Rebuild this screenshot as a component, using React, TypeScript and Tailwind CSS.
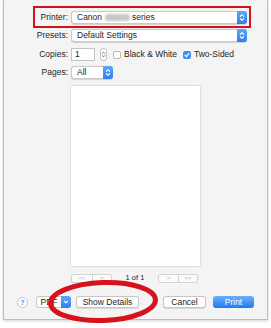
import React from "react";

const Arrows = ({ color = "white" }: { color?: string }) => (
  <svg width="6" height="9" viewBox="0 0 6 9" fill="none" stroke={color} strokeWidth="1.1" strokeLinecap="round" strokeLinejoin="round">
    <path d="M1.3 3.3 L3 1.6 L4.7 3.3" />
    <path d="M1.3 5.7 L3 7.4 L4.7 5.7" />
  </svg>
);

function Popup({ text, width, children }: { text?: string; width: string; children?: React.ReactNode }) {
  return (
    <div className={`${width} h-[13px] flex items-stretch bg-white border border-[#c9c9c9] rounded-[3px] shadow-[0_0.5px_1px_rgba(0,0,0,0.15)]`}>
      <div className="flex-1 flex items-center pl-[5px] text-[8.5px] text-[#1e1e1e] leading-none">
        {children ?? text}
      </div>
      <div className="w-[10px] -my-px -mr-px rounded-r-[3px] bg-gradient-to-b from-[#5ba6fb] to-[#2a80f1] flex items-center justify-center">
        <Arrows />
      </div>
    </div>
  );
}

function Checkbox({ checked }: { checked?: boolean }) {
  if (checked) {
    return (
      <div className="w-[8px] h-[8px] rounded-[2px] bg-[#3a8ef6] flex items-center justify-center">
        <svg width="6" height="6" viewBox="0 0 6 6" fill="none" stroke="white" strokeWidth="1.2" strokeLinecap="round" strokeLinejoin="round">
          <path d="M1 3.2 L2.4 4.6 L5 1.4" />
        </svg>
      </div>
    );
  }
  return <div className="w-[8px] h-[8px] rounded-[2px] bg-white border border-[#b8b8b8]" />;
}

function Button({ children, width, className = "" }: { children: React.ReactNode; width: string; className?: string }) {
  return (
    <div className={`${width} h-[12px] flex items-center justify-center bg-white border border-[#c6c6c6] rounded-[3px] text-[8.5px] leading-none text-[#1e1e1e] shadow-[0_0.5px_1px_rgba(0,0,0,0.12)] ${className}`}>
      {children}
    </div>
  );
}

export default function App() {
  return (
    <div className="relative w-[271px] h-[328px] bg-white overflow-hidden" style={{ fontFamily: '"Liberation Sans", Arial, sans-serif' }}>
      <div className="ml-[3px] w-[265px] h-[320px] bg-[#f4f4f4] border-x border-b border-[#bdbdbd] shadow-[0_1px_3px_rgba(0,0,0,0.18)] flex flex-col">
        {/* printer row */}
        <div className="mt-[6px] ml-[29px] w-[218px] h-[22px] border-2 border-[#d3121c] flex items-center">
          <div className="w-[33px] text-right text-[8.5px] text-[#1e1e1e] leading-none">Printer:</div>
          <div className="ml-[3px]">
            <Popup width="w-[176px]">
              <span>Canon</span>
              <span className="ml-[3px] w-[25px] h-[7px] rounded-[3px] bg-[#c8c8c8] blur-[1.2px]" />
              <span className="ml-[2px]">series</span>
            </Popup>
          </div>
        </div>

        {/* presets */}
        <div className="mt-[1px] h-[13px] flex items-center">
          <div className="w-[64px] text-right text-[8.5px] text-[#1e1e1e] leading-none">Presets:</div>
          <div className="ml-[3px]">
            <Popup width="w-[176px]" text="Default Settings" />
          </div>
        </div>

        {/* copies */}
        <div className="mt-[6px] h-[13px] flex items-center">
          <div className="w-[64px] text-right text-[8.5px] text-[#1e1e1e] leading-none">Copies:</div>
          <div className="ml-[3px] w-[24px] h-[13px] bg-white border border-[#c4c4c4] flex items-center pl-[3px] text-[8.5px] leading-none text-[#1e1e1e]">1</div>
          <div className="ml-[5px] w-[7px] h-[13px] bg-white border border-[#c4c4c4] rounded-[3px] flex items-center justify-center">
            <Arrows color="#6b6b6b" />
          </div>
          <div className="ml-[6px]">
            <Checkbox />
          </div>
          <div className="ml-[3px] text-[8.5px] leading-none text-[#1e1e1e]">Black &amp; White</div>
          <div className="ml-[6px]">
            <Checkbox checked />
          </div>
          <div className="ml-[3px] text-[8.5px] leading-none text-[#1e1e1e]">Two-Sided</div>
        </div>

        {/* pages */}
        <div className="mt-[5px] h-[13px] flex items-center">
          <div className="w-[64px] text-right text-[8.5px] text-[#1e1e1e] leading-none">Pages:</div>
          <div className="ml-[3px]">
            <Popup width="w-[42px]" text="All" />
          </div>
        </div>

        {/* preview */}
        <div className="mt-[7px] ml-[67px] w-[129px] h-[180px] bg-white shadow-[0_0_2px_rgba(0,0,0,0.25)]" />

        {/* page nav */}
        <div className="mt-[7px] h-[10px] flex items-center">
          <div className="ml-[67px] w-[41px] h-[9px] flex border border-[#d4d4d4] rounded-[2px] bg-[#fbfbfb] text-[6px] leading-none text-[#b5b5b5]">
            <div className="w-[21px] flex items-center justify-center border-r border-[#d4d4d4]">&lt;&lt;</div>
            <div className="flex-1 flex items-center justify-center">&lt;</div>
          </div>
          <div className="w-[46px] text-center text-[7.5px] leading-none text-[#1e1e1e]">1 of 1</div>
          <div className="w-[40px] h-[9px] flex border border-[#d4d4d4] rounded-[2px] bg-[#fbfbfb] text-[6px] leading-none text-[#b5b5b5]">
            <div className="w-[20px] flex items-center justify-center border-r border-[#d4d4d4]">&gt;</div>
            <div className="flex-1 flex items-center justify-center">&gt;&gt;</div>
          </div>
        </div>

        {/* bottom buttons */}
        <div className="mt-[13px] h-[12px] flex items-center">
          <div className="ml-[13px] w-[11px] h-[11px] rounded-full bg-white border border-[#c4c4c4] flex items-center justify-center text-[7px] font-bold leading-none text-[#3a8ef6]">?</div>
          <div className="ml-[8px] w-[35px] h-[12px] flex bg-white border border-[#c6c6c6] rounded-[3px] text-[8.5px] leading-none text-[#1e1e1e]">
            <div className="flex-1 flex items-center justify-center">PDF</div>
            <div className="w-[10px] -my-px -mr-px rounded-r-[3px] bg-gradient-to-b from-[#5ba6fb] to-[#2a80f1] flex items-center justify-center">
              <svg width="6" height="6" viewBox="0 0 6 6" fill="none" stroke="white" strokeWidth="1.1" strokeLinecap="round" strokeLinejoin="round">
                <path d="M1.3 2.2 L3 3.9 L4.7 2.2" />
              </svg>
            </div>
          </div>
          <Button width="w-[63px]" className="ml-[5px]">Show Details</Button>
          <Button width="w-[43px]" className="ml-[24px]">Cancel</Button>
          <div className="ml-[7px] w-[41px] h-[12px] flex items-center justify-center rounded-[3px] bg-gradient-to-b from-[#69b1fd] to-[#1a7af0] text-[8.5px] leading-none text-white">Print</div>
        </div>
      </div>

      {/* annotation ellipse */}
      <svg className="absolute left-0 top-0 pointer-events-none" width="271" height="328" viewBox="0 0 271 328">
        <ellipse cx="103" cy="301.5" rx="52.5" ry="19" fill="none" stroke="#d8121c" strokeWidth="5" transform="rotate(-2 103 301.5)" />
      </svg>
    </div>
  );
}
